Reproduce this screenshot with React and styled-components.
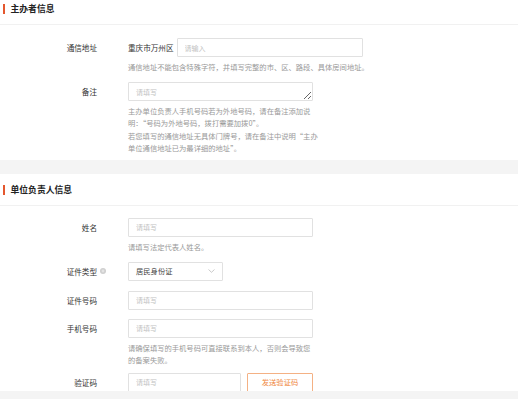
import React from "react";
import styled, { createGlobalStyle } from "styled-components";

const GlobalStyle = createGlobalStyle`
  html, body {
    margin: 0;
    padding: 0;
    background: #fff;
    overflow: hidden;
  }
  body {
    font-family: "Noto Sans CJK SC", "Noto Sans", sans-serif;
    color: #333;
  }
`;

const Page = styled.div`
  width: 518px;
  height: 399px;
  overflow: hidden;
  position: relative;
`;

const Scroller = styled.div`
  margin-top: -7px;
`;

const Section = styled.section`
  background: #fff;
`;

const SectionHeader = styled.div`
  height: 32px;
  display: flex;
  align-items: center;
  padding-left: 3px;
  padding-top: 1px;
  border-bottom: 1px solid #f1f1f1;
  box-sizing: border-box;
`;

const Bar = styled.span`
  width: 1.5px;
  height: 10px;
  background: #e4572e;
  margin-right: 6px;
`;

const Title = styled.h2`
  margin: 0;
  font-size: 8.8px;
  font-weight: 700;
  color: #222;
  line-height: 1;
`;

const FormBody = styled.div`
  padding: ${(p) => p.$top}px 0 ${(p) => p.$bottom}px;
  display: flex;
  flex-direction: column;
`;

const Row = styled.div`
  display: grid;
  grid-template-columns: 97px 1fr;
  column-gap: 31px;
  margin-bottom: ${(p) => p.$gap}px;
`;

const Label = styled.div`
  height: 19px;
  display: flex;
  align-items: center;
  justify-content: flex-end;
  font-size: 7.6px;
  color: #333;
  white-space: nowrap;
`;

const HelpIcon = styled.span`
  display: inline-flex;
  width: 6px;
  height: 6px;
  margin-left: 3px;
  margin-right: -9px;
`;

const Field = styled.div`
  display: flex;
  flex-direction: column;
`;

const Line = styled.div`
  display: flex;
  align-items: center;
  gap: ${(p) => p.$gap || 0}px;
`;

const Prefix = styled.span`
  font-size: 7.6px;
  color: #333;
  white-space: nowrap;
`;

const Input = styled.input`
  box-sizing: border-box;
  width: ${(p) => p.$w}px;
  height: 19px;
  border: 1px solid #e1e1e1;
  border-radius: 1px;
  padding: 0 7px;
  font-family: inherit;
  font-size: 7px;
  color: #333;
  outline: none;
  background: #fff;
  &::placeholder {
    color: #c2c2c2;
  }
`;

const TextArea = styled.textarea`
  box-sizing: border-box;
  width: 185px;
  height: 19px;
  border: 1px solid #e1e1e1;
  border-radius: 1px;
  padding: 4px 7px 0;
  font-family: inherit;
  font-size: 7px;
  line-height: 10px;
  resize: vertical;
  outline: none;
  display: block;
  &::placeholder {
    color: #c2c2c2;
  }
`;

const Select = styled.div`
  box-sizing: border-box;
  width: 95px;
  height: 19px;
  border: 1px solid #e1e1e1;
  border-radius: 1px;
  padding: 0 7px;
  display: flex;
  align-items: center;
  justify-content: space-between;
  font-size: 7.3px;
  color: #444;
`;

const Hint = styled.p`
  margin: 4px 0 ${(p) => p.$after || 0}px;
  font-size: 7.3px;
  line-height: 12.6px;
  color: #999;
  white-space: nowrap;
`;

const SendButton = styled.button`
  box-sizing: border-box;
  width: 66px;
  height: 19px;
  border: 1px solid #f4b184;
  border-radius: 1px;
  background: #fff;
  color: #f0883e;
  font-family: inherit;
  font-size: 7.3px;
  padding: 0;
`;

const Band = styled.div`
  height: 14px;
  background: #f4f4f4;
`;

const BottomBar = styled.div`
  position: absolute;
  left: 0;
  right: 0;
  bottom: 0;
  height: 8px;
  background: #f4f4f4;
`;

const Chevron = () => (
  <svg width="7" height="4" viewBox="0 0 7 4">
    <path d="M0.5 0.5 L3.5 3.3 L6.5 0.5" fill="none" stroke="#bdbdbd" strokeWidth="0.8" />
  </svg>
);

const Help = () => (
  <HelpIcon>
    <svg width="6" height="6" viewBox="0 0 6 6">
      <circle cx="3" cy="3" r="3" fill="#cfcfcf" />
      <circle cx="3" cy="3" r="1.4" fill="#e3e3e3" />
    </svg>
  </HelpIcon>
);

export default function App() {
  return (
    <Page>
      <GlobalStyle />
      <Scroller>
        <Section>
          <SectionHeader>
            <Bar />
            <Title>主办者信息</Title>
          </SectionHeader>
          <FormBody $top={13} $bottom={5}>
            <Row $gap={0}>
              <Label>通信地址</Label>
              <Field>
                <Line $gap={3}>
                  <Prefix>重庆市万州区</Prefix>
                  <Input $w={186} placeholder="请输入" />
                </Line>
                <Hint $after={8}>
                  通信地址不能包含特殊字符，并填写完整的市、区、路段、具体房间地址。
                </Hint>
              </Field>
            </Row>
            <Row $gap={0}>
              <Label>备注</Label>
              <Field>
                <TextArea placeholder="请填写" />
                <Hint>
                  主办单位负责人手机号码若为外地号码，请在备注添加说
                  <br />
                  明：“号码为外地号码，拨打需要加拨0”。
                  <br />
                  若您填写的通信地址无具体门牌号，请在备注中说明“主办
                  <br />
                  单位通信地址已为最详细的地址”。
                </Hint>
              </Field>
            </Row>
          </FormBody>
        </Section>
        <Band />
        <Section>
          <SectionHeader>
            <Bar />
            <Title>单位负责人信息</Title>
          </SectionHeader>
          <FormBody $top={12} $bottom={10}>
            <Row $gap={0}>
              <Label>姓名</Label>
              <Field>
                <Input $w={185} placeholder="请填写" />
                <Hint $after={8}>请填写法定代表人姓名。</Hint>
              </Field>
            </Row>
            <Row $gap={10}>
              <Label>
                证件类型
                <Help />
              </Label>
              <Select>
                居民身份证
                <Chevron />
              </Select>
            </Row>
            <Row $gap={9}>
              <Label>证件号码</Label>
              <Input $w={185} placeholder="请填写" />
            </Row>
            <Row $gap={0}>
              <Label>手机号码</Label>
              <Field>
                <Input $w={185} placeholder="请填写" />
                <Hint $after={6}>
                  请确保填写的手机号码可直接联系到本人，否则会导致您
                  <br />
                  的备案失败。
                </Hint>
              </Field>
            </Row>
            <Row $gap={0}>
              <Label>验证码</Label>
              <Line $gap={6}>
                <Input $w={113} placeholder="请填写" />
                <SendButton>发送验证码</SendButton>
              </Line>
            </Row>
          </FormBody>
        </Section>
      </Scroller>
      <BottomBar />
    </Page>
  );
}
